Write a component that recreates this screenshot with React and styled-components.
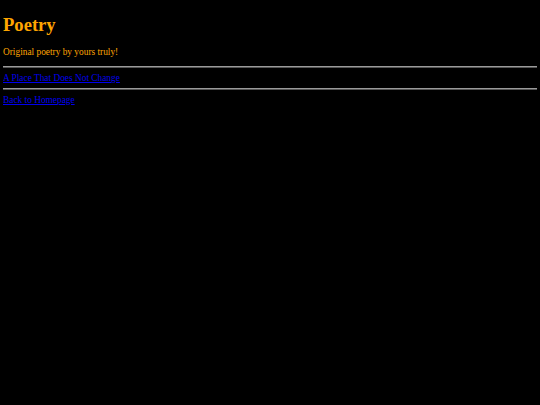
import React from 'react';
import styled, { createGlobalStyle } from 'styled-components';

const GlobalStyle = createGlobalStyle`
  html, body {
    background: #000;
  }

  body {
    margin: 5px 3px;
    font-family: "Liberation Serif", "Times New Roman", serif;
    color: orange;
  }
`;

const Title = styled.h1`
  font-size: 18.6px;
  font-weight: bold;
  margin: 9px 0 0;
  line-height: 1.15;
  color: orange;
`;

const Intro = styled.p`
  font-size: 9.35px;
  margin: 12px 0 0;
  line-height: 1.15;
`;

const Rule = styled.hr`
  border: none;
  border-top: 1px solid #9a9a9a;
  border-bottom: 1px solid #555;
  margin: ${(props) => props.top}px 0 0;
`;

const LinkRow = styled.p`
  font-size: 9.35px;
  line-height: 1.15;
  margin: ${(props) => props.top}px 0 0;
`;

const Link = styled.a`
  color: #0000ee;
  text-decoration: underline;
`;

export default function App() {
  return (
    <>
      <GlobalStyle />
      <Title>Poetry</Title>
      <Intro>Original poetry by yours truly!</Intro>
      <Rule top={8} />
      <LinkRow top={5}>
        <Link href="#">A Place That Does Not Change</Link>
      </LinkRow>
      <Rule top={4} />
      <LinkRow top={5}>
        <Link href="#">Back to Homepage</Link>
      </LinkRow>
    </>
  );
}
